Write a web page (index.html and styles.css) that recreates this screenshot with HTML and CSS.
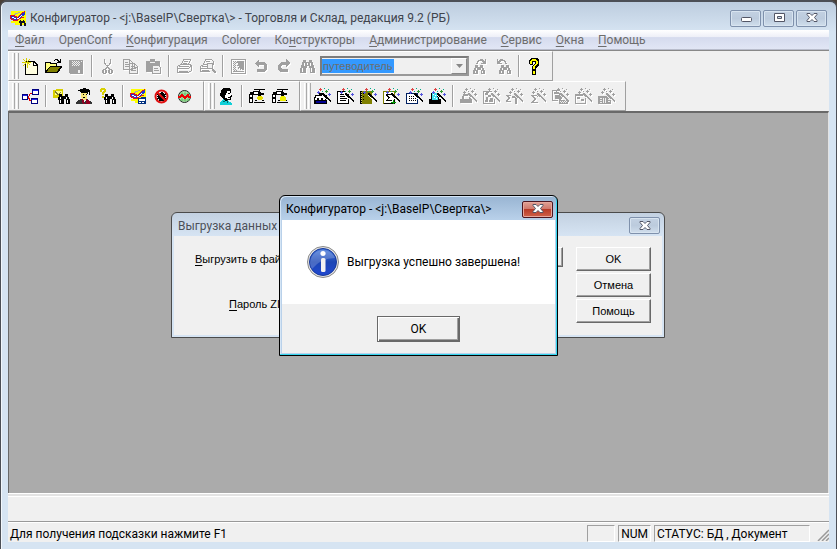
FILE: index.html
```html
<!DOCTYPE html>
<html lang="ru">
<head>
<meta charset="utf-8">
<title>Конфигуратор</title>
<link rel="stylesheet" href="styles.css">
</head>
<body>
<svg class="defs" aria-hidden="true">
  <symbol id="wand" viewBox="0 0 17 17">
    <path d="M8 5h2v1h1v1h1v1h1v1h1v1h1v1h1v1h1v2h-1v-1h-1v-1h-1v-1h-1v-1h-1v-1h-1V9h-1V8H9V7H8z"/>
    <path d="M8 7h1v1h1v1h1v1h1v1h1v1h1v1h1v1h-1v-1h-1v-1h-1v-1h-1v-1h-1V9H9V8H8z" fill="var(--hi,#fff)"/>
    <path d="M5 1h3v1H5zM6 0h1v3H6z" fill="var(--a,#d44)"/>
    <path d="M11 3h3v1h-3zM12 2h1v3h-1z" fill="var(--b,#393)"/>
    <path d="M3 4h3v1H3zM4 3h1v3H4zM14 6h3v1h-3zM15 5h1v3h-1z" fill="var(--c,#55d)"/>
    <path d="M10 0h1v1h-1zM14 1h1v1h-1zM8 3h1v1H8z" fill="var(--d,#0a8)"/>
  </symbol>
  <symbol id="bino" viewBox="0 0 17 17">
    <path d="M4 2h3v2h3V2h3v2h1v3h1v3h1v5h-5v-5h-1V8H8v2H7v5H1v-5h1V7h1V4h1z"/>
    <path d="M5 5h1v3H5zM11 5h1v3h-1zM3 10h1v4H3zM12 10h1v4h-1zM8 5h1v2H8z" fill="#fff"/>
  </symbol>
  <symbol id="cube" viewBox="0 0 17 17">
    <path d="M1 1h15v14H5v-2H1v-2h2V8H1z" fill="#ff0"/>
    <path d="M0 5h5v1h2v1h1V6h1V5h1V4h1V3h1V2h2V1h1v2h-1v1h-1v1h-1v1h-1v1h3v1h-3v1H9v1H8v1H3v-1H1V9H0z" fill="#e01020"/>
    <path d="M1 6h3v1h2v1h2V7h1V6h1V5h1V4h1V3h2V2h1v3h-1v1h-2v1h-1v1H9v1H7v1H4V9H2V8H1z" fill="#2038d0"/>
    <path d="M2 7h2v1h2v1H4V8H2zM7 8h2V7h1V6h1V5h1v1h-1v1h-1v1H9v1H7z" fill="#fff"/>
    <path d="M5 3h3v1H5zM4 4h2v1H4zM8 2h2v1H8z" fill="#aaa"/>
  </symbol>
  <symbol id="press" viewBox="0 0 17 17">
    <path d="M5 1h11v1h-5v2h1v1h3v2h-3v1h-3V7H4v8H0V6h1V4h3V3h6V2H5z"/>
    <path d="M1 7h2v2H1zM1 11h2v3H1zM5 4h4v2H5z" fill="#fff"/>
    <path d="M5 14h11v1H5zM6 12h2v1H6zM13 12h2v1h-2z"/>
    <path d="M9 8h4v3H9zM8 9h6v2H8zM9 11h4v1H9z" fill="#e8e000"/>
  </symbol>
</svg>

<div class="window">
  <header class="titlebar">
    <svg class="appicon" viewBox="0 0 17 17"><use href="#cube"/><path d="M10 10h1v1h2v-1h1v1h1v2h1v3h-2v-3h-2v3h-2v-3H9v-2h1z" fill="#112"/></svg>
    <h1>Конфигуратор - &lt;j:\BaseIP\Свертка\&gt; - Торговля и Склад, редакция 9.2 (РБ)</h1>
    <div class="caption">
      <button aria-label="Свернуть"><svg viewBox="0 0 12 10"><rect x="1.5" y="4.5" width="10" height="4" rx="1" fill="#fff" stroke="#535666"/></svg></button>
      <button aria-label="Развернуть"><svg viewBox="0 0 12 10"><path d="M1.5.5h10v8h-10z" fill="#fff" stroke="#535666"/><path d="M4.5 3.5h4v2h-4z" fill="#c9d8e8" stroke="#535666"/></svg></button>
      <button aria-label="Закрыть"><svg viewBox="0 0 12 10"><path d="M1 .5h3l2 2 2-2h3v1L8.500 4.500 11 7.500v1H8l-2-2-2 2H1v-1l2.500-3L1 1.500z" fill="#fff" stroke="#535666"/></svg></button>
    </div>
  </header>

  <nav class="menu">
    <a href="#"><u>Ф</u>айл</a><a href="#">OpenConf</a><a href="#"><u>К</u>онфигурация</a><a href="#">Colorer</a><a href="#">Ко<u>н</u>структоры</a><a href="#"><u>А</u>дминистрирование</a><a href="#"><u>С</u>ервис</a><a href="#"><u>О</u>кна</a><a href="#"><u>П</u>омощь</a>
  </nav>

  <div class="toolbars">
    <div class="row">
      <div class="bar">
        <span class="grip"></span>
        <button class="tool" aria-label="Создать"><svg viewBox="0 0 17 17"><path d="M3 3h9l4 4v10H3z" fill="#000"/><path d="M4 4h7v4h4v8H4z" fill="#fffee0"/><path d="M12 5l2 2h-2z" fill="#fff"/><path d="M4 0h1v3H4zM1 1h1v1h1v1h1v1H3V3H2V2H1zM7 1h1v1H7v1H6v1H5V3h1V2h1zM0 4h9v1H0zM3 5h1v1H3v1H2v1H1V7h1V6h1zM5 5h1v5H5zM6 5h1v1h1v1H7V6H6z" fill="#d8d000"/></svg></button>
        <button class="tool" aria-label="Открыть"><svg viewBox="0 0 17 17"><path d="M0 4h5l1 1h6v3h5v1l-4 6H0z"/><path d="M1 5h3l1 1h6v2H5l-4 5z" fill="#ffff80"/><path d="M5 9h10l-3 5H2z" fill="#808000"/><path d="M10 1h3v1h1v1h1V1h1v4h-4V4h1V3h-1V2h-2v1H9V2h1z"/></svg></button>
        <button class="tool off" aria-label="Сохранить"><svg viewBox="0 0 17 17"><path d="M1 2h14v14H2l-1-1z"/><path d="M4 3h1v1H4zM6 3h1v1H6zM8 3h1v1H8zM10 3h1v1h-1zM5 4h1v1H5zM7 4h1v1H7zM9 4h1v1H9zM11 4h1v1h-1zM4 5h1v1H4zM6 5h1v1H6zM8 5h1v1H8zM10 5h1v1h-1zM5 6h1v1H5zM7 6h1v1H7zM9 6h1v1H9zM11 6h1v1h-1zM4 7h1v1H4zM6 7h1v1H6zM8 7h1v1H8zM10 7h1v1h-1zM10 12h2v3h-2zM13 3h1v1h-1z" fill="#f0f0f0"/></svg></button>
        <span class="sep"></span>
        <button class="tool off" aria-label="Вырезать"><svg viewBox="0 0 17 17"><path d="M5.500 1v4l5 6M11.500 1v4l-5 6M8.500 7v3" fill="none" stroke="currentColor"/><path d="M4 11h3v1h1v3H7v1H4v-1H3v-3h1zm1 1v3h1v-3zM10 11h3v1h1v3h-1v1h-3v-1H9v-3h1zm1 1v3h1v-3z"/></svg></button>
        <button class="tool off" aria-label="Копировать"><svg viewBox="0 0 17 17"><path d="M1.500 1.500h6l3 3v7h-9zM7.500 5.500h5l3 3v7h-8z" fill="#f0f0f0" stroke="currentColor"/><path d="M3 4h3v1H3zM3 6h4v1H3zM3 8h4v1H3zM9 8h3v1H9zM9 10h5v1H9zM9 12h5v1H9zM7 2h1v3h3v1H7zM12 6h1v3h3v1h-4z"/></svg></button>
        <button class="tool off" aria-label="Вставить"><svg viewBox="0 0 17 17"><path d="M1 3h4V1h5v2h5v11H1z"/><path d="M5 4h5v1H5z" fill="#f0f0f0"/><path d="M7.500 7.500h6l2 2v6h-8z" fill="#f0f0f0" stroke="currentColor"/><path d="M9 10h4v1H9zM9 12h5v1H9z"/></svg></button>
        <span class="sep"></span>
        <button class="tool off" aria-label="Печать"><svg viewBox="0 0 17 17"><path d="M5.500 6.500l2-5h7l-2 5zM1.500 8.500l3-2h9l2 1v5l-3 2h-11zM2 10.500h10l3-2M3 13.500h9" fill="none" stroke="currentColor"/><path d="M8 3h4v1H8zM7 5h4v1H7zM3 8h10v1H3z"/></svg></button>
        <button class="tool off" aria-label="Просмотр"><svg viewBox="0 0 17 17"><path d="M4.500 6.500l2-5h6l2 2v3M1.500 8.500l3-2h4M1.500 8.500v5h9M2 10.500h6" fill="none" stroke="currentColor"/><circle cx="11" cy="8" r="3" fill="#f0f0f0" stroke="currentColor"/><path d="M7 3h4v1H7zM3 8h5v1H3zM3 12h7v1H3zM12 10h2l3 4v1h-2z"/></svg></button>
        <span class="sep"></span>
        <button class="tool off" aria-label="Модуль"><svg viewBox="0 0 17 17"><path d="M1.500 1.500h14v14h-14z" fill="none" stroke="currentColor"/><path d="M3 3h1v1H3zM5 3h1v1H5zM4 4h1v1H4zM3 5h1v1H3zM5 5h1v1H5zM4 6h1v1H4zM3 7h1v1H3zM5 7h1v1H5zM4 8h1v1H4zM3 9h1v1H3zM5 9h1v1H5zM4 10h1v1H4zM3 11h1v1H3zM5 11h1v1H5zM4 12h1v1H4zM3 13h11v1H3zM6 4h1v1H6zM6 12h1v1H6zM7 3h7v9h-2v-1h-1v1h-1v-2H9v1H8v-2H7V9h2V8H7V7h1V5H7z"/></svg></button>
        <button class="tool off" aria-label="Отменить"><svg viewBox="0 0 17 17"><path d="M2 5l4-4v3h5l3 3v5l-3 2H4v-3h6l1-1V8l-1-1H6v3z"/></svg></button>
        <button class="tool off" aria-label="Вернуть"><svg viewBox="0 0 17 17"><path d="M14 5l-4-4v3H5L2 7v5l3 2h7v-3H6l-1-1V8l1-1h4v3z"/></svg></button>
        <button class="tool off" aria-label="Найти"><svg viewBox="0 0 17 17"><use href="#bino"/></svg></button>
        <div class="combo">
          <select aria-label="Поиск"><option>путеводитель</option></select>
          <span class="drop" aria-hidden="true"><svg viewBox="0 0 7 4"><path d="M0 0h7L3.500 4z"/></svg></span>
        </div>
        <button class="tool off" aria-label="Найти далее"><svg viewBox="0 0 17 17"><path d="M3 7h3v2h2V7h3v3h1v2h1v4H9v-4H6v4H1v-4h1v-2h1z"/><path d="M4 10h1v2H4zM9 10h1v2H9zM3 13h1v2H3zM10 13h1v2h-1z" fill="#fff"/><path d="M4 5h1V3h1V2h2V1h3v1h1v1h1V1h1v5H9V5h2V4h-1V3H7v1H6v2H4z"/></svg></button>
        <button class="tool off" aria-label="Найти ранее"><svg viewBox="0 0 17 17"><path d="M6 7h3v2h2V7h3v3h1v2h1v4h-4v-4H9v4H4v-4h1v-2h1z"/><path d="M7 10h1v2H7zM12 10h1v2h-1zM6 13h1v2H6zM13 13h1v2h-1z" fill="#fff"/><path d="M12 5h-1V3h-1V2H8V1H5v1H4v1H3V1H2v5h5V5H5V4h1V3h3v1h1v2h2z"/></svg></button>
        <span class="sep"></span>
        <button class="tool" aria-label="Помощь"><svg viewBox="0 0 17 17"><path d="M5 0h6l2 2v5l-3 3v2H6V8l3-3V4H7v3H4L3 6V2zM6 12h4v5H6z"/><path d="M5 2h1V1h4v1h1v1h1v3h-1v1h-1v1H9v3H7V8h1V7h1V6h1V3H6v3H4V3h1zM7 13h2v3H7z" fill="#ff0"/></svg></button>
      </div>
    </div>

    <div class="row">
      <div class="bar">
        <span class="grip"></span>
        <button class="tool" aria-label="Метаданные"><svg viewBox="0 0 17 17"><path d="M0 6h6v6H0zM10 1h7v6h-7zM9 10h7v6H9z" fill="#000080"/><path d="M1 8h4v3H1zM11 3h5v3h-5zM10 12h5v3h-5z" fill="#fff"/><path d="M1 7h4v1H1zM11 2h5v1h-5zM10 11h5v1h-5z" fill="#22e"/><path d="M6 8h1V6h1V5h2v1H8v2H7v2h1v2h1v1H7v-2H6z" fill="#d00"/></svg></button>
        <span class="sep"></span>
        <button class="tool" aria-label="Найти объект"><svg viewBox="0 0 17 17"><path d="M0 2h3V1h7v9H0z" fill="#d8d000"/><path d="M2 3h7v4H2z" fill="#ff8"/><path d="M2 3h1v1h1v1h1v1h1V5h1V4h1v1H7v1H6v1H4V6H3V5H2z" fill="#773"/><path d="M6 6h3v2h3V6h3v3h1v2h1v5h-4v-5h-2v5H6v-4H5V9h1z"/><path d="M7 9h1v2H7zM13 9h1v2h-1zM7 12h1v3H7zM14 12h1v3h-1z" fill="#fff"/></svg></button>
        <button class="tool" aria-label="Пользователи"><svg viewBox="0 0 17 17"><path d="M2 2l6-2 6 2v1l-2 1v2H5V4L2 3z"/><path d="M5 5h6v5l-2 2H7l-2-2z" fill="#f7e67c"/><path d="M7 6h1v1H7zM10 6h1v1h-1zM7 9h2v1H7zM13 3h1v4h-1z"/><path d="M1 13l4-2 3 3 3-3 5 3v2H0v-1z" fill="#333"/><path d="M5 11h2l2 5H7zM10 11l4 2v3h-4z" fill="#900020"/></svg></button>
        <button class="tool" aria-label="Поиск справки"><svg viewBox="0 0 17 17"><path d="M1 1h1V0h4v1h1v3H6v1H5v2H3V4h1V3h1V2H3v2H1zM3 8h2v2H3z" fill="#d8d000"/><path d="M6 6h3v2h3V6h3v3h1v2h1v5h-4v-5h-2v5H6v-4H5V9h1z"/><path d="M7 9h1v2H7zM13 9h1v2h-1zM7 12h1v3H7zM14 12h1v3h-1z" fill="#fff"/></svg></button>
        <span class="sep"></span>
        <button class="tool" aria-label="Предприятие"><svg viewBox="0 0 17 17"><use href="#cube"/><path d="M8 10h3V9h5v7H8z" fill="#003080"/><path d="M9 11h6v2H9zM9 14h2v1H9zM12 14h2v1h-2z" fill="#fff"/></svg></button>
        <button class="tool" aria-label="Отладчик"><svg viewBox="0 0 17 17"><path d="M5 5h1v1h1V5h1V4h2v1h1v1h1V5h1v2h-1v1h1v1h-1v1h1v2h-1v-1h-1v2H6v-2H5v1H4v-2h1V9H4V8h1V7H4z"/><g shape-rendering="auto" fill="none" stroke="#e01010" stroke-width="2"><circle cx="8.500" cy="8.500" r="6"/><path d="M4 4l9 9"/></g></svg></button>
        <button class="tool" aria-label="Замер"><svg viewBox="0 0 17 17"><g shape-rendering="auto"><circle cx="8.500" cy="8.500" r="6" fill="#b4e8b4" stroke="#222"/><path d="M6 4v9M9 3v11M12 4v9M4 6h10M4 12h10" stroke="#50b050" stroke-width=".7"/></g><path d="M2 9h2l2-2 3 3 3-3 1 2h2" fill="none" stroke="#e00" stroke-width="2"/></svg></button>
      </div>
      <div class="bar">
        <span class="grip"></span>
        <button class="tool" aria-label="Пользователь"><svg viewBox="0 0 17 17"><path d="M3 2l2-2h6l2 2v3l1 3-1 1v3H9v2H5v-3L2 8z"/><path d="M9 3h3v2h1v3h-1v3H9v-1H7V7h1V5h1z" fill="#fff"/><path d="M10 5h2v1h-2zM10 9h2v1h-2z"/><path d="M2 14l3-3 2 2h3l4 2v2H2z" fill="#10d0d8"/><path d="M5 13h2v1H5zM9 12h1v3H9z" fill="#066"/></svg></button>
        <span class="sep"></span>
        <button class="tool" aria-label="Выгрузить данные"><svg viewBox="0 0 17 17"><use href="#press"/></svg></button>
        <button class="tool" aria-label="Загрузить данные"><svg viewBox="0 0 17 17"><use href="#press"/><path d="M9 8h4v1h1v4H8V9h1z" fill="#ee0"/></svg></button>
      </div>
      <div class="bar">
        <span class="grip"></span>
        <button class="tool" aria-label="Конструктор справочника"><svg viewBox="0 0 17 17"><path d="M1 7h4V5h4v2h4v9H0V9h1z"/><path d="M2 8h8v2H2zM1 10h2v2H1zM5 10h2v2H5zM9 10h2v2H9z" fill="#fff"/><path d="M2 13h10v2H2z" fill="#000090"/><use href="#wand"/></svg></button>
        <button class="tool" aria-label="Конструктор документа"><svg viewBox="0 0 17 17"><path d="M0 3h8v3h4v10H0z"/><path d="M1 4h7v3h3v8H1z" fill="#fff"/><path d="M3 6h4v1H3zM3 8h5v1H3zM3 10h7v1H3zM3 12h6v1H3z"/><use href="#wand"/></svg></button>
        <button class="tool" aria-label="Конструктор журнала"><svg viewBox="0 0 17 17"><path d="M0 3h12v13H0z" fill="#808000"/><path d="M0 3h2v13H0zM3 5h1v1H3zM3 8h1v1H3zM3 11h1v1H3z"/><path d="M1 4h1v1H1zM1 6h1v1H1zM1 8h1v1H1zM1 10h1v1H1zM1 12h1v1H1zM1 14h1v1H1z" fill="#cc6"/><use href="#wand"/></svg></button>
        <button class="tool" aria-label="Конструктор отчёта"><svg viewBox="0 0 17 17"><path d="M0 3h12v13H0z" fill="#808000"/><path d="M1 4h10v11H1z" fill="#fff"/><path d="M3 6h6v2H8V7H5v1h1v1h1v1H6v1H5v1h4v1H3v-1h1v-1h1V9H4V8H3zM11 9h1v7H1v-1h10z"/><path d="M10 12h1v4h-1zM8 14h5v1H8z" fill="#090"/><use href="#wand"/></svg></button>
        <button class="tool" aria-label="Конструктор запроса"><svg viewBox="0 0 17 17"><path d="M0 5h12v11H0z" fill="#002060"/><path d="M1 6h10v9H1z" fill="#fff"/><path d="M3 8h1v1H3zM5 8h1v1H5zM7 8h1v1H7zM3 10h1v1H3zM5 10h1v1H5zM7 10h1v1H7zM9 10h1v1H9zM3 12h1v1H3zM5 12h1v1H5zM7 12h1v1H7zM9 12h1v1H9z"/><use href="#wand"/></svg></button>
        <button class="tool" aria-label="Конструктор печати"><svg viewBox="0 0 17 17"><path d="M2 5h7l1 6h2v5H0v-5h2z"/><path d="M3 5h5l1 7H3z" fill="#40e0f0"/><path d="M4 6h1v1H4zM6 7h1v1H6zM5 9h1v1H5zM7 10h1v1H7z" fill="#fff"/><use href="#wand"/></svg></button>
        <span class="sep"></span>
        <button class="tool off" aria-label="Правка справочника"><svg viewBox="0 0 17 17"><path d="M3 6h6l2 5h1v4H0v-4h2zm1 2v3h5V8z" fill-rule="evenodd"/><use href="#wand"/></svg></button>
        <button class="tool off" aria-label="Правка документа"><svg viewBox="0 0 17 17"><path d="M0 3h9v1H1v11h10v-4h1v5H0zM2 5h3v2H2zM5 7h3v2H5zM3 9h2v5H2v-2h1zM7 10h3v4H6v-2h1z"/><use href="#wand"/></svg></button>
        <button class="tool off" aria-label="Правка запроса"><svg viewBox="0 0 17 17"><path d="M0 7h5v1H2l2 2-2 3h3v1H0v-1l2-3-2-2zM6 8h7v2h-2v6H9v-6H6z"/><use href="#wand"/></svg></button>
        <button class="tool off" aria-label="Сумма"><svg viewBox="0 0 17 17"><path d="M2 7h7v2H8V8H5l2 3-2 3h4v1H2v-1l3-3-3-3z"/><use href="#wand"/></svg></button>
        <button class="tool off" aria-label="Печатная форма"><svg viewBox="0 0 17 17"><path d="M0 2h8v1H1v9h5v1H0zM2 4h5v2H2zM3 7h4V5l5 4-5 4v-2H3zM7 12h9v4H7z"/><path d="M8 13h1v1H8zM10 13h1v1h-1zM12 13h1v1h-1zM9 14h1v1H9zM11 14h1v1h-1zM13 14h1v1h-1z" fill="#f0f0f0"/><use href="#wand"/></svg></button>
        <button class="tool off" aria-label="Диалог"><svg viewBox="0 0 17 17"><path d="M0 6h11v10H0zm1 2v7h9V8zM2 9h3v2H2zM6 11h3v2H6z" fill-rule="evenodd"/><use href="#wand"/></svg></button>
        <button class="tool off" aria-label="Бухгалтерия"><svg viewBox="0 0 17 17"><path d="M0 8h13v8H0z"/><path d="M2 10h2v1H2zM2 12h2v1H2zM2 14h2v1H2zM5 10h1v1H5zM7 10h1v1H7zM5 11h1v4H5zM7 11h1v4H7zM10 11h2v1h-2zM10 13h2v1h-2z" fill="#f0f0f0"/><use href="#wand"/></svg></button>
      </div>
    </div>
  </div>

  <main class="workspace"></main>
  <div class="strip"></div>
  <footer class="status">
    <span class="hint">Для получения подсказки нажмите F1</span>
    <span class="cell blank"></span>
    <span class="cell">NUM</span>
    <span class="cell state">СТАТУС: БД , Документ</span>
    <svg class="sizer" viewBox="0 0 12 12"><path d="M1 12L12 1M5 12l7-7M9 12l3-3" stroke="#999" stroke-width="1.500"/></svg>
  </footer>
</div>

<section class="dialog export">
  <header>
    <h2>Выгрузка данных</h2>
    <button class="close" aria-label="Закрыть"><svg viewBox="0 0 12 10"><path d="M1 .5h3l2 2 2-2h3v1L8.500 4.500 11 7.500v1H8l-2-2-2 2H1v-1l2.500-3L1 1.500z" fill="#fff" stroke="#535666"/></svg></button>
  </header>
  <form class="content">
    <div class="fields">
      <label for="file"><u>В</u>ыгрузить в файл:</label><input id="file" type="text"><button type="button" class="push" aria-label="Обзор"></button>
      <label for="zip"><u>П</u>ароль ZIP:</label><input id="zip" type="password">
    </div>
    <div class="actions">
      <button type="button" class="push">OK</button>
      <button type="button" class="push">Отмена</button>
      <button type="button" class="push">Помощь</button>
    </div>
  </form>
</section>

<section class="dialog message" role="alertdialog">
  <header>
    <h2>Конфигуратор - &lt;j:\BaseIP\Свертка\&gt;</h2>
    <button class="close" aria-label="Закрыть"><svg viewBox="0 0 12 10"><path d="M1 .5h3l2 2 2-2h3v1L8.500 4.500 11 7.500v1H8l-2-2-2 2H1v-1l2.500-3L1 1.500z" fill="#fff" stroke="#535666"/></svg></button>
  </header>
  <div class="text">
    <svg class="info" viewBox="0 0 32 32">
      <defs><linearGradient id="g" x1="0" y1="0" x2="0" y2="1"><stop offset="0" stop-color="#4a7cdc"/><stop offset=".5" stop-color="#1c46b4"/><stop offset="1" stop-color="#2148d0"/></linearGradient></defs>
      <circle cx="16" cy="16" r="15.500" fill="#e4e4e4" stroke="#8a8a8a"/>
      <circle cx="16" cy="16" r="13.500" fill="url(#g)" stroke="#16389c"/>
      <path d="M3 17a13 13 0 0 1 25-5Q14 12 5 23 3 20 3 17z" fill="#fff" opacity=".2"/>
      <circle cx="16" cy="7.500" r="2.600" fill="#fff"/><rect x="14" y="12" width="4.500" height="14" rx="1.500" fill="#f2f2f2"/>
    </svg>
    <p>Выгрузка успешно завершена!</p>
  </div>
  <footer><button class="push">OK</button></footer>
</section>
</body>
</html>
```

FILE: styles.css
```css
* { box-sizing: border-box; }
body {
  margin: 0;
  background: #4a4038;
  font: 12px/16px Roboto, "Open Sans", sans-serif;
  color: #000;
}
button { padding: 0; font: inherit; color: inherit; }
h1, h2, p { margin: 0; font-size: 12px; font-weight: 400; white-space: nowrap; }
u { text-underline-offset: 2px; }
.defs { position: absolute; width: 0; height: 0; }

.window {
  display: flex;
  flex-direction: column;
  height: 100vh;
  padding: 0 7px 7px;
  border: 1px solid #4c4f56;
  border-top-width: 2px;
  border-bottom: 0;
  border-radius: 7px 7px 0 0;
  background: linear-gradient(#bdcddf, #d6e4f2 30px);
  box-shadow: inset 1px 0 #f2f7fc;
}

.titlebar { display: flex; align-items: center; height: 28px; flex: none; }
.appicon { width: 17px; height: 17px; margin: 4px 3px 0 2px; shape-rendering: crispEdges; }
.titlebar h1 { flex: 1; padding-top: 4px; color: #3f444c; }
.caption { display: flex; gap: 2px; padding: 4px 2px 0; }
.caption button, .export .close {
  display: grid;
  place-items: center;
  width: 31px;
  height: 17px;
  border: 1px solid #7f91ac;
  border-radius: 2px;
  background: linear-gradient(#c3d1e2, #bccbdd 50%, #d0deec);
  box-shadow: inset 0 0 0 1px #d8e4f0;
}
.caption svg, .close svg { width: 12px; height: 10px; }

.menu {
  display: flex;
  flex: none;
  gap: 14px;
  height: 20px;
  padding: 2px 7px;
  border-bottom: 1px solid #b8bccb;
  background: linear-gradient(#fff, #eef0f8 35%, #d5dbee 40%, #e1e6f5);
}
.menu a { color: #6d6d6d; text-decoration: none; white-space: nowrap; }

.toolbars {
  flex: none;
  border-top: 1px solid #888;
  background: #f0f0f0;
}
.row { display: flex; height: 30px; }
.bar {
  display: flex;
  align-items: center;
  padding: 0 6px 0 3px;
  border: 1px solid #a0a0a0;
  border-color: #fff #a0a0a0 #a0a0a0 #fff;
}
.row + .row .bar { padding-right: 7px; }
.grip {
  width: 7px;
  height: 26px;
  border: solid #aaa;
  border-width: 0 1px;
  background: linear-gradient(90deg, #f0f0f0 1px, #aaa 1px 2px, #f0f0f0 2px 3px, #fff 3px 4px, #f0f0f0 4px);
  border-left-color: #fff;
}
.tool {
  display: grid;
  place-items: center;
  width: 23px;
  height: 22px;
  border: 0;
  background: none;
}
.tool svg { width: 17px; height: 17px; shape-rendering: crispEdges; }
.off {
  --hi: #f0f0f0; --a: #a0a0a0; --b: #a0a0a0; --c: #a0a0a0; --d: #a0a0a0;
  color: #a0a0a0;
  fill: #a0a0a0;
  filter: drop-shadow(1px 1px 0 #fff);
}
.sep { width: 2px; height: 22px; margin: 0 3px; border-left: 1px solid #a0a0a0; border-right: 1px solid #fff; }

.combo {
  display: flex;
  align-items: center;
  justify-content: space-between;
  width: 149px;
  height: 20px;
  margin-left: 1px;
  border: 2px solid #7c7c7c;
  border-right-color: #999;
  border-bottom-color: #999;
}
.combo select {
  appearance: none;
  height: 14px;
  padding: 0 1px;
  border: 0;
  background: #3399ff;
  color: #6d6d6d;
  font: 11px/14px "Liberation Sans", sans-serif;
}
.drop {
  display: grid;
  place-items: center;
  width: 16px;
  height: 16px;
  border: 1px solid;
  border-color: #fff #888 #888 #fff;
}
.drop svg { width: 7px; height: 4px; fill: #888; }

.workspace {
  flex: 1;
  border: 1px solid #696969;
  border-top-width: 2px;
  border-right-color: #e3e3e3;
  border-bottom: 0;
  background: #ababab;
}
.strip {
  flex: none;
  height: 28px;
  border-top: 1px solid #fff;
  background: linear-gradient(#e3e3e3 2px, #fff 2px 3px, #f0f0f0 3px);
}
.status {
  display: flex;
  flex: none;
  align-items: center;
  gap: 3px;
  height: 21px;
  border-top: 1px solid #999;
  background: linear-gradient(#fff 1px, #f0f0f0 1px);
  white-space: nowrap;
}
.hint { flex: 1; padding: 3px 2px 0; }
.cell {
  height: 17px;
  min-width: 28px;
  padding: 0 2px;
  margin-top: 2px;
  border: 1px solid;
  border-color: #a0a0a0 #fff #fff #a0a0a0;
}
.state { width: 156px; }
.sizer { width: 12px; height: 12px; margin: 6px 0 0 4px; }

.dialog { position: absolute; border-radius: 6px 6px 0 0; }
.dialog header { display: flex; align-items: center; justify-content: space-between; }

.export {
  left: 171px;
  top: 212px;
  width: 494px;
  border: 1px solid #4b4b4b;
  padding: 0 2px 2px;
  background: linear-gradient(#c3d1e1, #d6e4f3 23px);
}
.export header { height: 23px; padding: 2px 2px 0 4px; color: #4c5058; }
.content {
  display: flex;
  justify-content: space-between;
  padding: 11px 11px 12px 21px;
  background: #f0f0f0;
  font: 11px/16px "Liberation Sans", sans-serif;
}
.fields {
  display: grid;
  grid-template-columns: auto 245px 24px;
  grid-auto-rows: 20px;
  align-content: start;
  align-items: center;
  row-gap: 25px;
  column-gap: 2px;
}
.fields label { padding-top: 4px; justify-self: end; white-space: nowrap; }
.fields input { width: 100%; height: 20px; border: 1px solid #888; }
.fields .push { height: 20px; }
.actions { display: grid; gap: 2px; width: 75px; }
.push {
  height: 24px;
  border: 1px solid;
  border-color: #fff #696969 #696969 #fff;
  background: #f0f0f0;
  box-shadow: inset -1px -1px #a0a0a0;
}

.message {
  left: 279px;
  top: 195px;
  width: 279px;
  border: 1px solid #000;
  padding: 0 2px 2px;
  background: linear-gradient(#98b4d2, #b9d1ea 24px);
  box-shadow: inset -1px -1px #35d5ee, inset 1px 1px #d5e5f5;
}
.message header { height: 24px; padding: 2px 2px 0 4px; }
.message .close {
  display: grid;
  place-items: center;
  width: 31px;
  height: 17px;
  border: 1px solid #4c1620;
  border-radius: 2px;
  background: linear-gradient(#dfa195, #d0766a 48%, #b83b28 50%, #d0624a);
  box-shadow: inset 0 0 0 1px #e6a79d;
}
.text { display: flex; align-items: center; gap: 8px; height: 84px; padding-left: 25px; background: #fff; }
.info { width: 32px; height: 32px; }
.message footer { display: grid; place-items: center; height: 49px; background: #f0f0f0; }
.message .push {
  width: 83px;
  height: 26px;
  border: 1px solid #696969;
  box-shadow: inset 1px 1px #fff, inset -1px -1px #696969, inset -2px -2px #a0a0a0;
}
```
